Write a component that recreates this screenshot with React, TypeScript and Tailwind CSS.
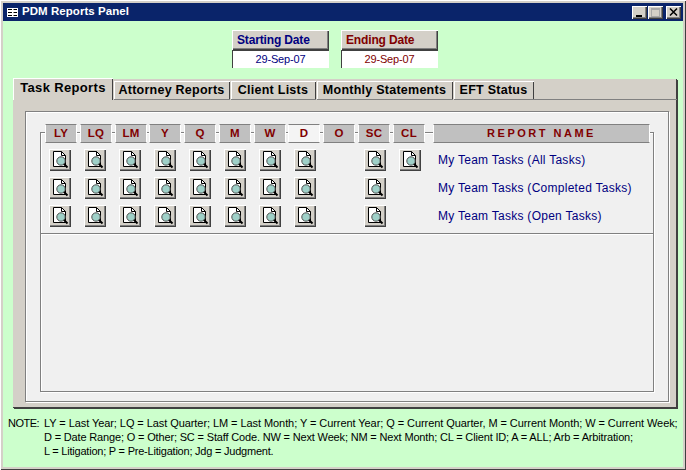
const raised = 'shadow-[inset_1px_1px_0_#ffffff,inset_-1px_-1px_0_#404040,inset_-2px_-2px_0_#808080]';
const etched = 'border border-[#808080] shadow-[inset_1px_1px_0_#ffffff,1px_1px_0_#ffffff]';

const columns = [
  { label: 'LY', width: 'w-[32px] mr-[3px]' },
  { label: 'LQ', width: 'w-[32px] mr-[3px]' },
  { label: 'LM', width: 'w-[32px] mr-[2px]' },
  { label: 'Y', width: 'w-[32px] mr-[3px]' },
  { label: 'Q', width: 'w-[32px] mr-[3px]' },
  { label: 'M', width: 'w-[32px] mr-[3px]' },
  { label: 'W', width: 'w-[32px] mr-[2px]' },
  { label: 'D', width: 'w-[32px] mr-[3px]', active: true },
  { label: 'O', width: 'w-[32px] mr-[3px]' },
  { label: 'SC', width: 'w-[32px] mr-[3px]' },
  { label: 'CL', width: 'w-[32px] mr-[8px]' },
];

const tabs = [
  { label: 'Attorney Reports', width: 'w-[116px]' },
  { label: 'Client Lists', width: 'w-[85px]' },
  { label: 'Monthly Statements', width: 'w-[136px]' },
  { label: 'EFT Status', width: 'w-[80px]' },
];

const rows = [
  { name: 'My Team Tasks (All Tasks)', cells: [1, 1, 1, 1, 1, 1, 1, 1, 0, 1, 1] },
  { name: 'My Team Tasks (Completed Tasks)', cells: [1, 1, 1, 1, 1, 1, 1, 1, 0, 1, 0] },
  { name: 'My Team Tasks (Open Tasks)', cells: [1, 1, 1, 1, 1, 1, 1, 1, 0, 1, 0] },
];

function PreviewIcon() {
  return (
    <svg width="18" height="18" viewBox="0 0 18 18" className="block">
      <path d="M2.5 0.5H10.5L14.5 4.5V15.5H2.5Z" fill="#ffffff" stroke="#000000" />
      <path d="M10.5 0.5V4.5H14.5" fill="none" stroke="#000000" />
      <circle cx="10" cy="10" r="4.2" fill="#9fd0c8" stroke="#505050" />
      <path d="M13 13L16.5 16.5" stroke="#000000" strokeWidth="2" />
    </svg>
  );
}

function DateBox({ label, value, color, valueColor }: { label: string; value: string; color: string; valueColor: string }) {
  return (
    <div className="w-[97px]">
      <div className={`h-[20px] bg-[#d4d0c8] flex items-center pl-[5px] text-[12px] font-bold tracking-[-0.15px] ${color} ${raised}`}>{label}</div>
      <div className={`h-[18px] bg-white flex items-center justify-center text-[11px] tracking-[-0.15px] ${valueColor} shadow-[inset_1px_1px_0_#404040]`}>{value}</div>
    </div>
  );
}

export default function App() {
  return (
    <div className="w-[686px] h-[470px] p-[3px] bg-[#d4d0c8] flex flex-col overflow-hidden font-['Liberation_Sans',sans-serif] shadow-[inset_1px_1px_0_#ffffff,inset_-1px_-1px_0_#404040]">
      <div className="h-[18px] shrink-0 bg-[#0a246a] flex items-center pl-[4px] pr-[2px] text-white">
        <svg width="11" height="9" viewBox="0 0 11 9" className="mr-[4px]">
          <rect width="11" height="9" fill="#ffffff" />
          <path d="M1 1.5H5M6.5 1.5H10M1 4.5H5M6.5 4.5H10M1 7.5H5M6.5 7.5H10" stroke="#000000" />
        </svg>
        <span className="text-[11.5px] font-bold tracking-[0.05px]">PDM Reports Panel</span>
        <div className="ml-auto flex">
          <div className={`w-[15px] h-[13px] bg-[#d4d0c8] relative ${raised}`}>
            <div className="absolute left-[4px] bottom-[2px] w-[6px] h-[2px] bg-black" />
          </div>
          <div className={`ml-px w-[15px] h-[13px] bg-[#d4d0c8] flex items-center justify-center ${raised}`}>
            <div className="w-[9px] h-[9px] border border-[#a8a8a8] border-t-2" />
          </div>
          <div className={`ml-[3px] w-[15px] h-[13px] bg-[#d4d0c8] flex items-center justify-center ${raised}`}>
            <svg width="9" height="8" viewBox="0 0 9 8">
              <path d="M1 0.5L8 7.5M8 0.5L1 7.5" stroke="#000000" strokeWidth="1.5" />
            </svg>
          </div>
        </div>
      </div>

      <div className="flex-1 bg-[#ccffcc] flex flex-col">
        <div className="flex gap-[12px] ml-[229px] mt-[9px]">
          <DateBox label="Starting Date" value="29-Sep-07" color="text-[#000080]" valueColor="text-[#000080]" />
          <DateBox label="Ending Date" value="29-Sep-07" color="text-[#800000]" valueColor="text-[#800000]" />
        </div>

        <div className="ml-[10px] mr-[6px] mt-[11px] bg-[#d4d0c8] shadow-[inset_-1px_-1px_0_#404040,1px_1px_0_#404040]">
          <div className="h-[21px] flex items-end">
            <div className="w-[100px] h-[22px] pb-[3px] flex items-center justify-center text-[13px] font-bold tracking-[0.35px] text-black shadow-[inset_1px_1px_0_#ffffff,inset_-1px_0_0_#404040]">
              Task Reports
            </div>
            {tabs.map(tab => (
              <div
                key={tab.label}
                className={`${tab.width} ml-[1px] first:ml-0 h-[19px] pr-[1px] flex items-center justify-center text-[12.5px] font-bold tracking-[0.25px] text-black border-b border-[#808080] shadow-[inset_1px_1px_0_#ffffff,inset_-1px_0_0_#404040]`}
              >
                {tab.label}
              </div>
            ))}
            <div className="flex-1 h-px bg-[#808080]" />
          </div>

          <div className="pl-[12px] pr-[8px] pt-[11px] pb-[6px]">
            <div className={`h-[291px] bg-[#f0f0f0] pt-[20px] pl-[14px] pr-[14px] pb-[10px] ${etched}`}>
              <div className={`h-[260px] flex flex-col ${etched}`}>
                <div className="-mt-[9px] pl-[4px] flex h-[19px] shrink-0">
                  {columns.map(col => (
                    <div
                      key={col.label}
                      className={`${col.width} flex items-center justify-center text-[11.5px] font-bold tracking-[0.3px] text-[#800000] border border-t-[#808080] border-l-[#ffffff] border-b-[#808080] border-r-[#ffffff] ${col.active ? 'bg-[#f4f4f4]' : 'bg-[#c0c0c0]'}`}
                    >
                      {col.label}
                    </div>
                  ))}
                  <div className="w-[217px] bg-[#c0c0c0] flex items-center justify-center text-[11px] font-bold tracking-[2.5px] text-[#800000] border border-t-[#808080] border-l-[#ffffff] border-b-[#808080] border-r-[#ffffff]">
                    REPORT NAME
                  </div>
                </div>

                <div className="h-[91px] shrink-0 pt-[6px] pl-[8px] flex flex-col gap-[6px] border-b border-[#808080] shadow-[0_1px_0_#ffffff]">
                  {rows.map(row => (
                    <div key={row.name} className="flex items-center h-[22px]">
                      <div className="w-[388px] flex gap-[13px] shrink-0">
                        {row.cells.map((on, i) =>
                          on ? (
                            <div key={i} className={`w-[22px] h-[22px] bg-[#d4d0c8] flex items-center justify-center ${raised}`}>
                              <PreviewIcon />
                            </div>
                          ) : i === 8 ? (
                            <div key={i} className="w-[22px] h-[22px]" />
                          ) : null
                        )}
                      </div>
                      <span className="ml-[1px] text-[12px] tracking-[0.27px] text-[#000080] whitespace-nowrap">{row.name}</span>
                    </div>
                  ))}
                </div>
              </div>
            </div>
          </div>
        </div>

        <div className="mt-[8px] ml-[5px] flex text-[11px] leading-[14px] text-[#000000]">
          <div className="w-[36px] shrink-0 tracking-[-0.5px]">NOTE:</div>
          <div className="whitespace-nowrap">
            <div className="tracking-[-0.07px]">LY = Last Year; LQ = Last Quarter; LM = Last Month; Y = Current Year; Q = Current Quarter, M = Current Month; W = Current Week;</div>
            <div className="tracking-[-0.16px]">D = Date Range; O = Other; SC = Staff Code. NW = Next Week; NM = Next Month; CL = Client ID; A = ALL; Arb = Arbitration;</div>
            <div className="tracking-[-0.22px]">L = Litigation; P = Pre-Litigation; Jdg = Judgment.</div>
          </div>
        </div>
      </div>
    </div>
  );
}
